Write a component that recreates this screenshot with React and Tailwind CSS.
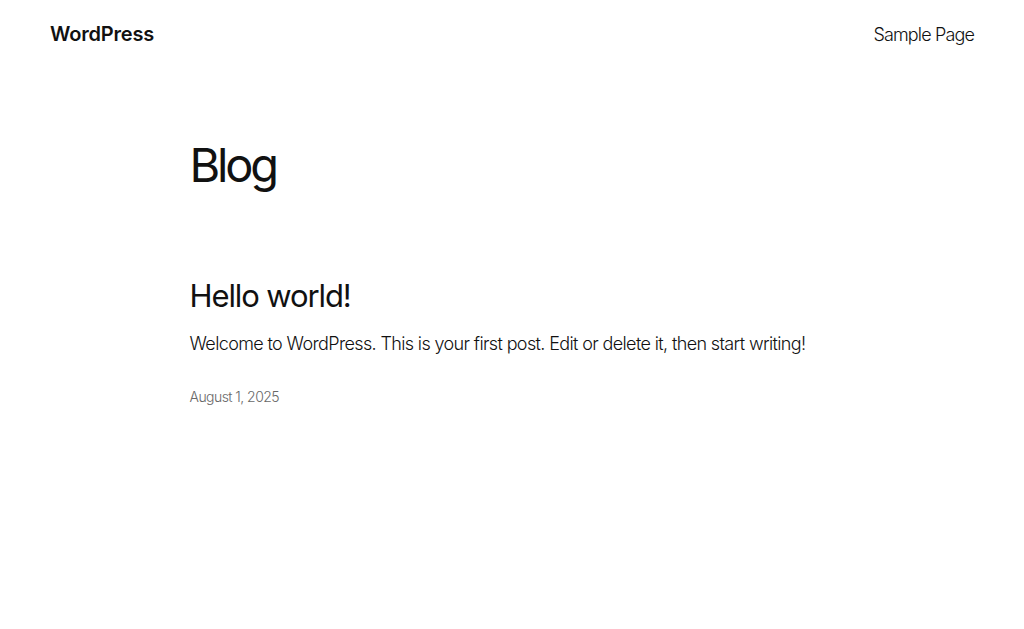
import React from "react";

const font = { fontFamily: "Inter, 'Noto Sans', sans-serif" };

const Header = () => (
  <header className="flex items-center justify-between px-[50px] h-[68px]">
    <a className="text-[20px] font-semibold tracking-[-0.2px] text-[#111111]">WordPress</a>
    <nav>
      <a className="text-[18px] font-light tracking-[-0.85px] text-[#111111]">Sample Page</a>
    </nav>
  </header>
);

export default function App() {
  return (
    <div className="min-h-[629px] bg-white text-[#111111]" style={font}>
      <Header />
      <main className="mx-auto w-[645px] pt-[69px]">
        <h1 className="text-[47px] font-normal leading-[1.2] tracking-[-3.2px]">Blog</h1>
        <article className="pt-[84px]">
          <h2 className="text-[31px] font-normal leading-[1.2] tracking-[-1.1px]">Hello world!</h2>
          <p className="mt-[15px] text-[18px] font-light leading-[1.6] tracking-[-0.63px]">
            Welcome to WordPress. This is your first post. Edit or delete it, then start writing!
          </p>
          <p className="mt-[28px] text-[14px] font-light tracking-[-0.55px] text-[#686868]">August 1, 2025</p>
        </article>
      </main>
    </div>
  );
}
